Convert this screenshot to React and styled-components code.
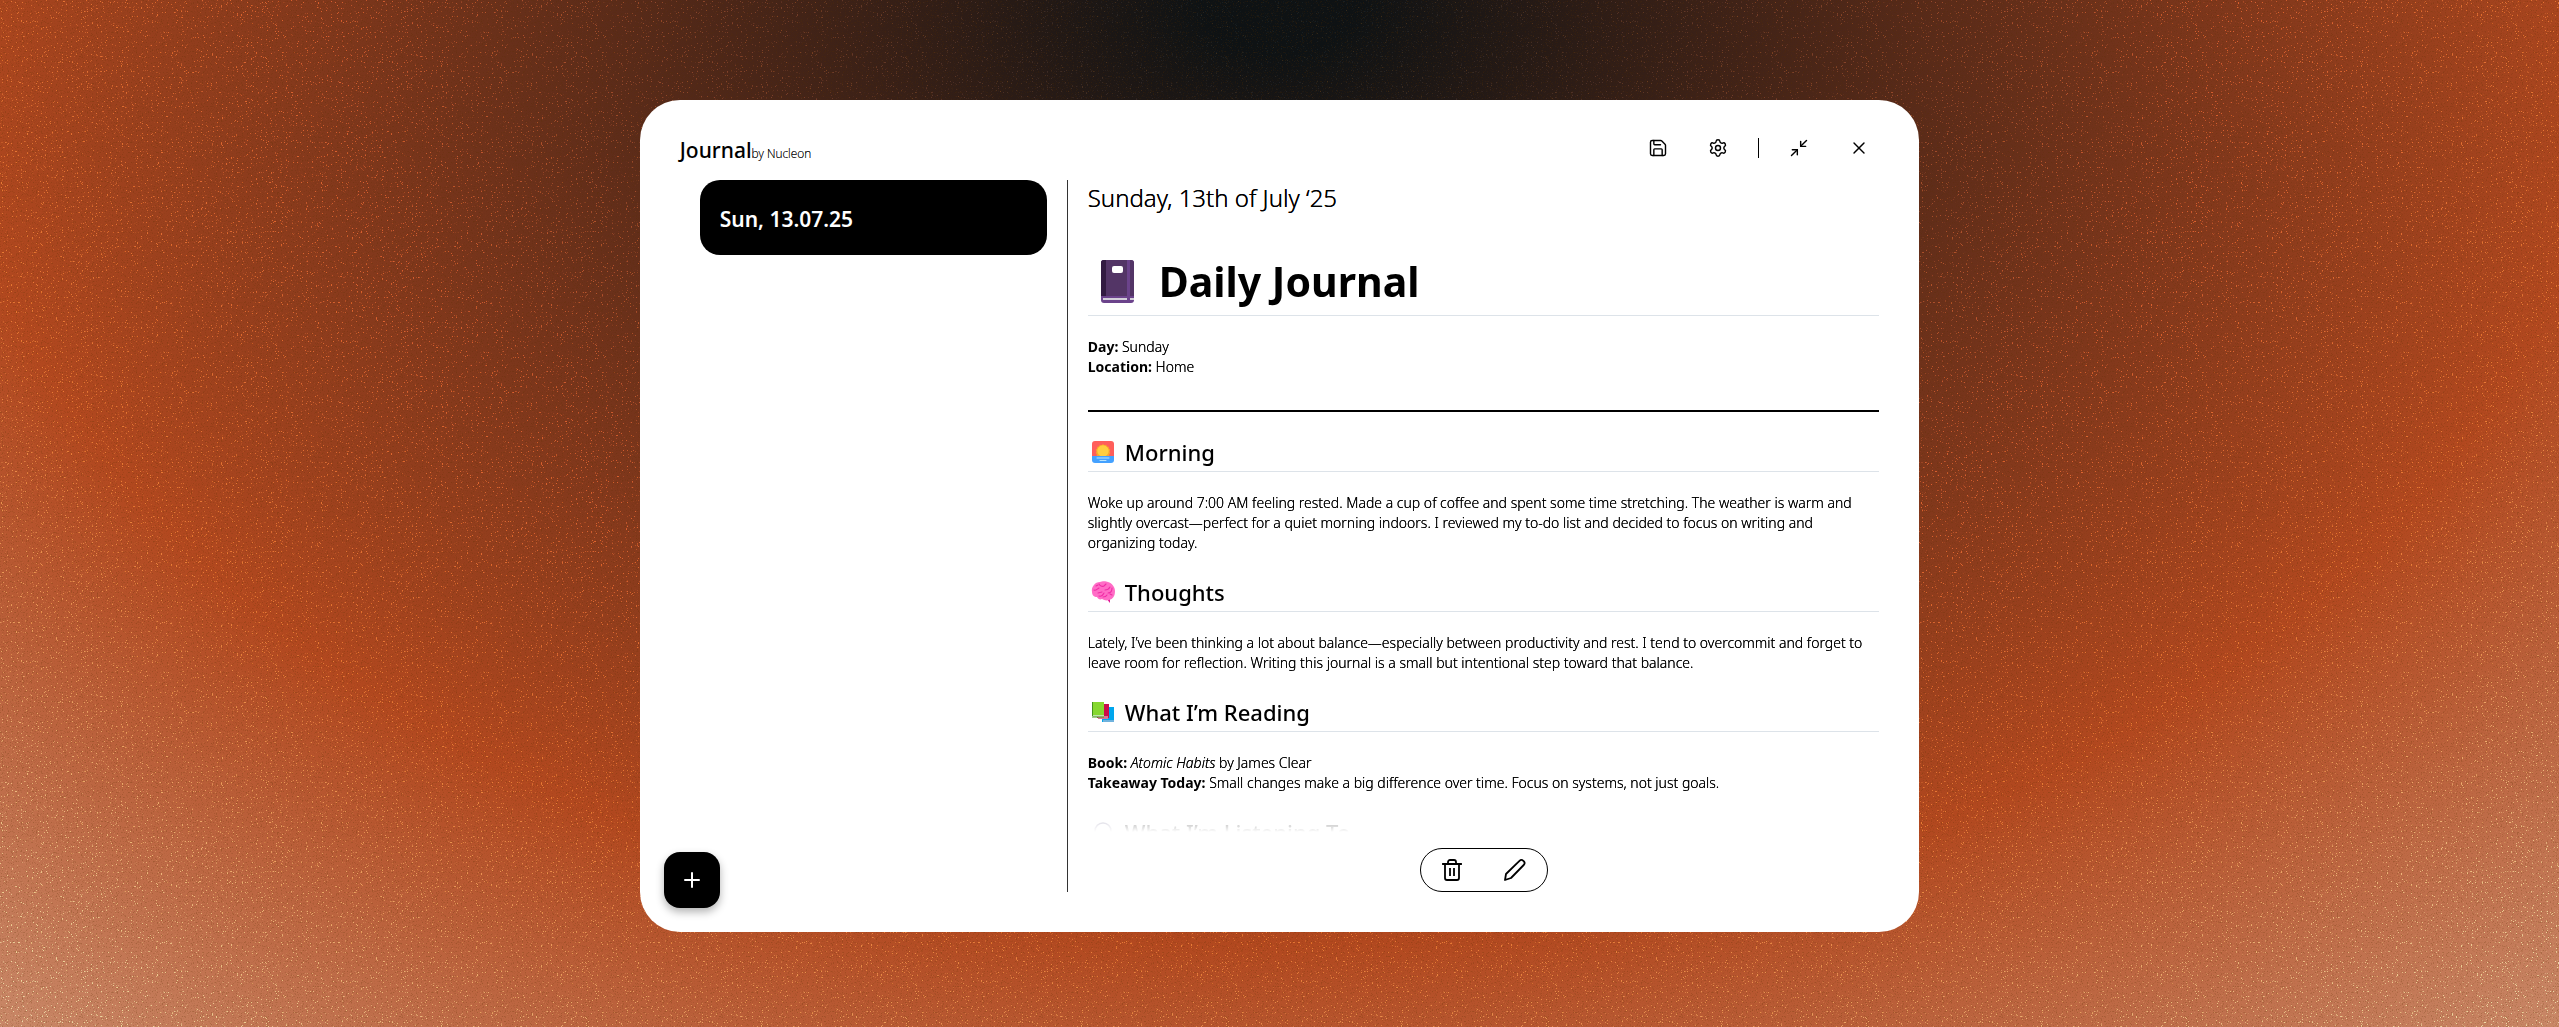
import React from "react";
import styled, { createGlobalStyle } from "styled-components";
import { Save, Settings, Minimize2, X, Plus } from "lucide-react";

const Global = createGlobalStyle`
  * { box-sizing: border-box; }
  body { margin: 0; background: #b2481f; font-family: "Noto Sans", "Open Sans", sans-serif; color: #000; }
  h1, h2, p { margin: 0; }
  button { font: inherit; color: inherit; background: none; border: 0; padding: 0; cursor: pointer; }
`;

const Page = styled.div`
  position: relative;
  isolation: isolate;
  height: 100vh;
  overflow: hidden;
  padding: 100px 25% 95px;
  display: flex;
  background: radial-gradient(ellipse 76% 133% at 50% 0%, #0e1214 4%, #b2481f 69%, #c98868 100%);
`;

const Grain = styled.svg`
  position: absolute;
  inset: 0;
  width: 100%;
  height: 100%;
  z-index: -1;
  mix-blend-mode: ${(p) => p.$blend};
  opacity: ${(p) => p.$strength};
`;

const Panel = styled.main`
  position: relative;
  flex: 1;
  min-width: 0;
  display: flex;
  flex-direction: column;
  background: #fff;
  border-radius: 40px;
  padding: 28px 40px 40px;
`;

const Header = styled.header`
  display: flex;
  align-items: center;
  justify-content: space-between;
  height: 40px;
  margin-bottom: 12px;
`;

const Brand = styled.div`
  display: flex;
  align-items: baseline;
  padding-top: 7px;
  font-size: 21px;
  line-height: 30px;
  font-weight: 500;
`;

const Byline = styled.span`
  font-size: 12px;
  font-weight: 200;
  text-shadow: 0 0 0 currentColor;
`;

const Toolbar = styled.nav`
  display: flex;
  align-items: center;
  gap: 20px;
`;

const IconButton = styled.button`
  display: grid;
  place-items: center;
  width: 40px;
  height: 40px;
`;

const Rule = styled.span`
  width: 1px;
  height: 20px;
  background: #000;
`;

const Columns = styled.div`
  flex: 1;
  min-height: 0;
  display: grid;
  grid-template-columns: 388px minmax(0, 1fr);
  grid-template-rows: minmax(0, 1fr);
`;

const Sidebar = styled.aside`
  padding: 0 20px;
  border-right: 1px solid #333;
`;

const Entry = styled.button`
  width: 100%;
  height: 75px;
  padding: 2px 20px 0;
  border-radius: 20px;
  background: #000;
  color: #fff;
  font-size: 21px;
  font-weight: 600;
  text-align: left;
`;

const Content = styled.section`
  display: flex;
  flex-direction: column;
  align-items: center;
  min-height: 0;
  padding-left: 20px;
`;

const DateLine = styled.p`
  width: 100%;
  font-size: 24px;
  line-height: 36px;
  font-weight: 300;
  text-shadow: 0 0 0 currentColor;
`;

const Scroll = styled.article`
  width: 100%;
  flex: 1;
  min-height: 0;
  overflow: hidden;
  padding-top: 34px;
  mask-image: linear-gradient(#000 calc(100% - 40px), transparent 100%);
`;

const Title = styled.h1`
  display: flex;
  align-items: center;
  gap: 19px;
  height: 66px;
  padding-bottom: 3px;
  padding-left: 8px;
  border-bottom: 1px solid #dde3e9;
  font-size: 41px;
  line-height: 60px;
  font-weight: 700;
`;

const Heading = styled.h2`
  display: flex;
  align-items: center;
  gap: 10px;
  height: 40px;
  margin-top: 19px;
  padding-left: 3px;
  border-bottom: 1px solid #dde3e9;
  font-size: 22px;
  font-weight: 500;
`;

const Text = styled.p`
  margin: 21px 0 0;
  font-size: 14px;
  line-height: 20px;
  font-weight: 300;
  text-shadow: 0 0 0 currentColor;
  b { font-weight: 700; text-shadow: none; }
`;

const Divider = styled.hr`
  height: 2px;
  margin: 33px 0 20px;
  border: 0;
  background: #000;
`;

const Actions = styled.div`
  display: flex;
  align-items: center;
  justify-content: space-around;
  width: 128px;
  height: 44px;
  margin-top: 16px;
  border: 1px solid #000;
  border-radius: 22px;
`;

const AddButton = styled.button`
  position: absolute;
  left: 24px;
  bottom: 24px;
  display: grid;
  place-items: center;
  width: 56px;
  height: 56px;
  border-radius: 16px;
  background: #000;
  color: #fff;
  box-shadow: 0 4px 8px rgba(0, 0, 0, 0.3);
`;

const Notebook = () => (
  <svg width="44" height="44" viewBox="0 0 44 44" aria-hidden="true">
    <rect x="5" y="1" width="33" height="43" rx="3" fill="#6b438b" />
    <path d="M5 4a3 3 0 0 1 3-3h27a3 3 0 0 1 3 3v33H5z" fill="#533566" />
    <path d="M5 4a3 3 0 0 1 3-3h2v36H5z" fill="#321b41" />
    <path d="M31 1h3v36h-3z" fill="#6b438b" />
    <path d="M7 39h31v2H7z" fill="#d3cfda" />
    <path d="M31 37h3v7h-3z" fill="#6b438b" />
    <rect x="16" y="7" width="11" height="7" rx="2" fill="#fff" />
  </svg>
);

const Sunrise = () => (
  <svg width="24" height="24" viewBox="0 0 24 24" aria-hidden="true">
    <path d="M1 4a3 3 0 0 1 3-3h16a3 3 0 0 1 3 3v12H1z" fill="#ff5e5a" />
    <path d="m12 4 1.4 1.2 1.8-.5.7 1.7 1.9.4v1.8l1.5 1.1-.8 1.7.8 1.6-1.2 1.4.2 1.6H5.7l.2-1.6-1.2-1.4.8-1.6-.8-1.7 1.5-1.1V6.8l1.9-.4.7-1.7 1.8.5z" fill="#f9a62b" />
    <circle cx="12" cy="11" r="5.7" fill="#ffce3f" />
    <path d="M1 16h22v4a3 3 0 0 1-3 3H4a3 3 0 0 1-3-3z" fill="#44a1ff" />
    <path d="M6 18h12M9 20.5h6" stroke="#b8e5ff" strokeLinecap="round" />
  </svg>
);

const Brain = () => (
  <svg width="24" height="24" viewBox="0 0 24 24" aria-hidden="true">
    <path d="m15 18 4 5v-5z" fill="#e01894" />
    <path d="M1 12C0 7 4 2 9 2c2-1 6-1 8 0 4 1 7 5 7 9 0 5-2 8-6 9-3 1-5 0-7-1-2 1-4 0-5-2-3 0-5-2-5-5z" fill="#ff6dc6" />
    <path d="M3 10c2 1 3-1 5-2m0-4c1 2 3 3 5 2l2-2m-1 6c2 0 4-1 5-3m2 1c0 3-1 5-4 5m-9 3c3 1 4-1 5-3M7 13l4-1m5 3c-1 2-3 2-4 2m7-3 2 1M5 6l2-1" fill="none" stroke="#f02ca6" strokeWidth="1.1" strokeLinecap="round" />
  </svg>
);

const Books = () => (
  <svg width="24" height="24" viewBox="0 0 24 24" aria-hidden="true">
    <path d="M11 7h12v15H11z" fill="#00a6ed" />
    <path d="M12 20h11v2H12z" fill="#6fb2dd" />
    <path d="M6 4h12v14H6z" fill="#ca0b4a" />
    <path d="M7 16h10v3H7z" fill="#d67895" />
    <path d="M1 2h12v14H1z" fill="#86d72f" />
    <path d="M1 2h1v14H1z" fill="#44911b" />
    <path d="M2 15h11v2H2z" fill="#c1e3ad" />
    <path d="M1 17h12" stroke="#44911b" />
  </svg>
);

const Headphones = () => (
  <svg width="24" height="24" viewBox="0 0 24 24" aria-hidden="true">
    <path d="M4 15v-4a8 8 0 0 1 16 0v4" fill="none" stroke="#8b86a5" strokeWidth="1.5" />
    <rect x="3" y="13" width="5" height="8" rx="2" fill="#635994" />
    <rect x="16" y="13" width="5" height="8" rx="2" fill="#635994" />
  </svg>
);

const Trash = () => (
  <svg width="24" height="24" viewBox="0 0 24 24" fill="none" stroke="#000" strokeWidth="1.8" strokeLinecap="square" aria-hidden="true">
    <path d="M3 6h18M8 5.5V4a2 2 0 0 1 2-2h4a2 2 0 0 1 2 2v1.5M5 6v14a2 2 0 0 0 2 2h10a2 2 0 0 0 2-2V6M10 11v6M14 11v6" />
  </svg>
);

const Pencil = () => (
  <svg width="24" height="24" viewBox="0 0 24 24" fill="none" stroke="#000" strokeWidth="1.8" strokeLinejoin="round" aria-hidden="true">
    <path d="M2 22l1-6L16.5 2.8a2.7 2.7 0 0 1 3.8 0l.4.4a2.7 2.7 0 0 1 0 3.8L8 20z" />
  </svg>
);

const Background = () => (
  <>
    <Grain $blend="normal" $strength={0.25} aria-hidden="true">
      <filter id="dark" x="0" y="0" width="100%" height="100%">
        <feTurbulence type="fractalNoise" baseFrequency="0.8" numOctaves="3" seed="9" />
        <feColorMatrix values="0 0 0 0 0.1  0 0 0 0 0.03  0 0 0 0 0  5 0 0 0 -2.8" />
      </filter>
      <rect width="100%" height="100%" filter="url(#dark)" />
    </Grain>
    <Grain $blend="color-dodge" $strength={0.7} aria-hidden="true">
      <filter id="light" x="0" y="0" width="100%" height="100%" colorInterpolationFilters="sRGB">
        <feTurbulence type="fractalNoise" baseFrequency="0.8" numOctaves="3" seed="4" />
        <feColorMatrix values="0 0 0 0 0.5  0 0 0 0 0.5  0 0 0 0 0.5  12 0 0 0 -8.1" />
      </filter>
      <rect width="100%" height="100%" filter="url(#light)" />
    </Grain>
  </>
);

export default function App() {
  return (
    <Page>
      <Global />
      <Background />
      <Panel>
        <Header>
          <Brand>Journal<Byline>by Nucleon</Byline></Brand>
          <Toolbar aria-label="Window">
            <IconButton aria-label="Save"><Save size={20} strokeWidth={1.7} /></IconButton>
            <IconButton aria-label="Settings"><Settings size={20} strokeWidth={1.7} /></IconButton>
            <Rule />
            <IconButton aria-label="Minimize"><Minimize2 size={20} strokeWidth={1.7} /></IconButton>
            <IconButton aria-label="Close"><X size={20} strokeWidth={1.7} /></IconButton>
          </Toolbar>
        </Header>
        <Columns>
          <Sidebar><Entry>Sun, 13.07.25</Entry></Sidebar>
          <Content>
            <DateLine>Sunday, 13th of July ‘25</DateLine>
            <Scroll>
              <Title><Notebook />Daily Journal</Title>
              <Text><b>Day:</b> Sunday<br /><b>Location:</b> Home</Text>
              <Divider />
              <Heading><Sunrise />Morning</Heading>
              <Text>Woke up around 7:00 AM feeling rested. Made a cup of coffee and spent some time stretching. The weather is warm and slightly overcast—perfect for a quiet morning indoors. I reviewed my to-do list and decided to focus on writing and organizing today.</Text>
              <Heading><Brain />Thoughts</Heading>
              <Text>Lately, I’ve been thinking a lot about balance—especially between productivity and rest. I tend to overcommit and forget to leave room for reflection. Writing this journal is a small but intentional step toward that balance.</Text>
              <Heading><Books />What I’m Reading</Heading>
              <Text><b>Book:</b> <i>Atomic Habits</i> by James Clear<br /><b>Takeaway Today:</b> Small changes make a big difference over time. Focus on systems, not just goals.</Text>
              <Heading><Headphones />What I’m Listening To</Heading>
            </Scroll>
            <Actions>
              <IconButton aria-label="Delete"><Trash /></IconButton>
              <IconButton aria-label="Edit"><Pencil /></IconButton>
            </Actions>
          </Content>
        </Columns>
        <AddButton aria-label="New entry"><Plus size={24} strokeWidth={2} /></AddButton>
      </Panel>
    </Page>
  );
}
